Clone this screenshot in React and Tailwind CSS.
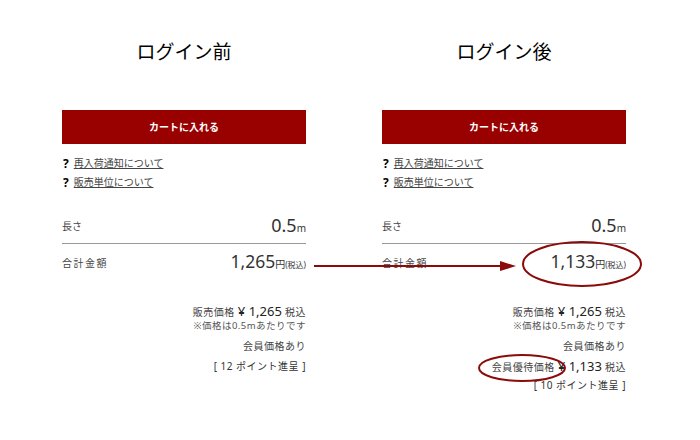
import React from 'react';

const font = { fontFamily: '"Noto Sans", "Noto Sans CJK JP", sans-serif' };

const Panel = ({ title, total, member }) => {
  return (
    <div className="w-[244px] flex flex-col text-[#333]">
      <h2 className="mt-[40px] h-[24px] leading-[24px] text-center text-[19px] text-black">{title}</h2>

      <button className="mt-[46px] h-[34px] w-full bg-[#990000] text-white text-[10px] font-bold">
        カートに入れる
      </button>

      <div className="mt-[10px] flex flex-col text-[10px] leading-[19px] pl-[1px]">
        <div className="flex items-center gap-[5px]">
          <span className="font-bold text-black text-[12px]">?</span>
          <span className="underline text-[#444]">再入荷通知について</span>
        </div>
        <div className="flex items-center gap-[5px]">
          <span className="font-bold text-black text-[12px]">?</span>
          <span className="underline text-[#444]">販売単位について</span>
        </div>
      </div>

      <div className="mt-[26px] flex justify-between items-end h-[26px] border-b border-[#999] pb-[4px]">
        <span className="text-[10px] text-[#444] leading-[14px] mb-[6px]">長さ</span>
        <span className="leading-[22px]">
          <span className="text-[18px]">0.5</span>
          <span className="text-[10px]">m</span>
        </span>
      </div>

      <div className="mt-[7px] flex justify-between items-center h-[24px]">
        <span className="text-[10px] text-[#444] tracking-[0.15em]">合計金額</span>
        <span className="leading-[24px]">
          <span className="text-[17.5px]">{total}</span>
          <span className="text-[10px]">円</span>
          <span className="text-[8px]">(税込)</span>
        </span>
      </div>

      <div className="mt-[28px] flex flex-col items-end">
        <div className="h-[16px] leading-[16px] text-[10px] text-[#444] tracking-[0.05em]">
          販売価格 <span className="text-[13px] text-[#222] tracking-normal">¥ 1,265</span> 税込
        </div>
        <div className="h-[14px] leading-[14px] text-[9.5px] text-[#555] tracking-[0.05em]">
          ※価格は0.5mあたりです
        </div>
        <div className="mt-[5px] h-[16px] leading-[16px] text-[10px] text-[#444] tracking-[0.05em]">
          会員価格あり
        </div>
        {member ? (
          <>
            <div className="mt-[3px] h-[18px] leading-[18px] text-[10px] text-[#444] tracking-[0.05em]">
              会員優待価格 <span className="text-[13px] text-[#222] tracking-normal">¥ 1,133</span> 税込
            </div>
            <div className="mt-[1px] h-[18px] leading-[18px] text-[10px] text-[#333] tracking-[0.05em]">
              [ 10 ポイント進呈 ]
            </div>
          </>
        ) : (
          <div className="mt-[3px] h-[18px] leading-[18px] text-[10px] text-[#333] tracking-[0.05em]">
            [ 12 ポイント進呈 ]
          </div>
        )}
      </div>
    </div>
  );
};

export default function App() {
  return (
    <div className="relative w-[700px] h-[440px] bg-white overflow-hidden" style={font}>
      <div className="flex pl-[62px] gap-[76px]">
        <Panel title="ログイン前" total="1,265" />
        <Panel title="ログイン後" total="1,133" member />
      </div>

      <svg className="absolute left-0 top-0 pointer-events-none" width="700" height="440">
        <line x1="314" y1="266" x2="502" y2="266" stroke="#8b0a0a" strokeWidth="2" />
        <polygon points="500,261 516,266 500,271" fill="#8b0a0a" />
        <ellipse cx="582" cy="264" rx="59" ry="22" fill="none" stroke="#8b0a0a" strokeWidth="2" />
        <ellipse cx="522" cy="368" rx="43" ry="13" fill="none" stroke="#8b0a0a" strokeWidth="2" />
      </svg>
    </div>
  );
}
